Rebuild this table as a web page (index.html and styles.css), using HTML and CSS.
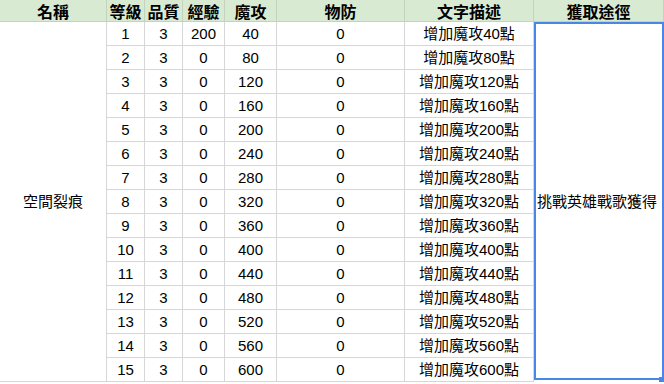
FILE: index.html
```html
<!DOCTYPE html>
<html lang="zh-Hant">
<head>
<meta charset="utf-8">
<link rel="stylesheet" href="styles.css">
</head>
<body>
<div class="sheet">
  <div class="hd">名稱</div>
  <div class="hd">等級</div>
  <div class="hd">品質</div>
  <div class="hd">經驗</div>
  <div class="hd">魔攻</div>
  <div class="hd">物防</div>
  <div class="hd">文字描述</div>
  <div class="hd">獲取途徑</div>
  <div class="c name">空間裂痕</div>
  <div class="c">1</div><div class="c">3</div><div class="c">200</div><div class="c">40</div><div class="c">0</div><div class="c">增加魔攻40點</div>
  <div class="c">2</div><div class="c">3</div><div class="c">0</div><div class="c">80</div><div class="c">0</div><div class="c">增加魔攻80點</div>
  <div class="c">3</div><div class="c">3</div><div class="c">0</div><div class="c">120</div><div class="c">0</div><div class="c">增加魔攻120點</div>
  <div class="c">4</div><div class="c">3</div><div class="c">0</div><div class="c">160</div><div class="c">0</div><div class="c">增加魔攻160點</div>
  <div class="c">5</div><div class="c">3</div><div class="c">0</div><div class="c">200</div><div class="c">0</div><div class="c">增加魔攻200點</div>
  <div class="c">6</div><div class="c">3</div><div class="c">0</div><div class="c">240</div><div class="c">0</div><div class="c">增加魔攻240點</div>
  <div class="c">7</div><div class="c">3</div><div class="c">0</div><div class="c">280</div><div class="c">0</div><div class="c">增加魔攻280點</div>
  <div class="c">8</div><div class="c">3</div><div class="c">0</div><div class="c">320</div><div class="c">0</div><div class="c">增加魔攻320點</div>
  <div class="c">9</div><div class="c">3</div><div class="c">0</div><div class="c">360</div><div class="c">0</div><div class="c">增加魔攻360點</div>
  <div class="c">10</div><div class="c">3</div><div class="c">0</div><div class="c">400</div><div class="c">0</div><div class="c">增加魔攻400點</div>
  <div class="c">11</div><div class="c">3</div><div class="c">0</div><div class="c">440</div><div class="c">0</div><div class="c">增加魔攻440點</div>
  <div class="c">12</div><div class="c">3</div><div class="c">0</div><div class="c">480</div><div class="c">0</div><div class="c">增加魔攻480點</div>
  <div class="c">13</div><div class="c">3</div><div class="c">0</div><div class="c">520</div><div class="c">0</div><div class="c">增加魔攻520點</div>
  <div class="c">14</div><div class="c">3</div><div class="c">0</div><div class="c">560</div><div class="c">0</div><div class="c">增加魔攻560點</div>
  <div class="c">15</div><div class="c">3</div><div class="c">0</div><div class="c">600</div><div class="c">0</div><div class="c">增加魔攻600點</div>
  <div class="c source">挑戰英雄戰歌獲得<span class="handle"></span></div>
</div>
</body>
</html>
```
FILE: styles.css
```css
html, body {
  margin: 0;
  padding: 0;
  background: #ffffff;
}
.sheet {
  display: grid;
  grid-template-columns: 107px 38px 38px 42px 52px 128px 129px 130px;
  grid-template-rows: 22px repeat(15, 24px);
  width: 664px;
  font-family: "Liberation Sans", "Noto Sans CJK TC", sans-serif;
  color: #000;
}
.hd {
  background: #d9ead3;
  border-right: 1px solid #c4d3be;
  border-bottom: 1px solid #c4d3be;
  font-family: "Noto Sans CJK TC", sans-serif;
  font-weight: 700;
  font-size: 16px;
  line-height: 16px;
  display: flex;
  align-items: center;
  justify-content: center;
  white-space: nowrap;
  box-sizing: border-box;
}
.c {
  border-right: 1px solid #d6d6d6;
  border-bottom: 1px solid #d6d6d6;
  font-size: 15px;
  line-height: 23px;
  text-align: center;
  white-space: nowrap;
  box-sizing: border-box;
}
.name {
  grid-column: 1;
  grid-row: 2 / span 15;
  display: flex;
  align-items: center;
  justify-content: center;
}
.source {
  grid-column: 8;
  grid-row: 2 / span 15;
  position: relative;
  display: flex;
  align-items: center;
  justify-content: flex-start;
  padding-left: 1px;
  border: 2px solid #4a86e8;
  margin-bottom: 2px;
}
.handle {
  position: absolute;
  right: -2px;
  bottom: -6px;
  width: 5px;
  height: 7px;
  background: #4a86e8;
}
```
